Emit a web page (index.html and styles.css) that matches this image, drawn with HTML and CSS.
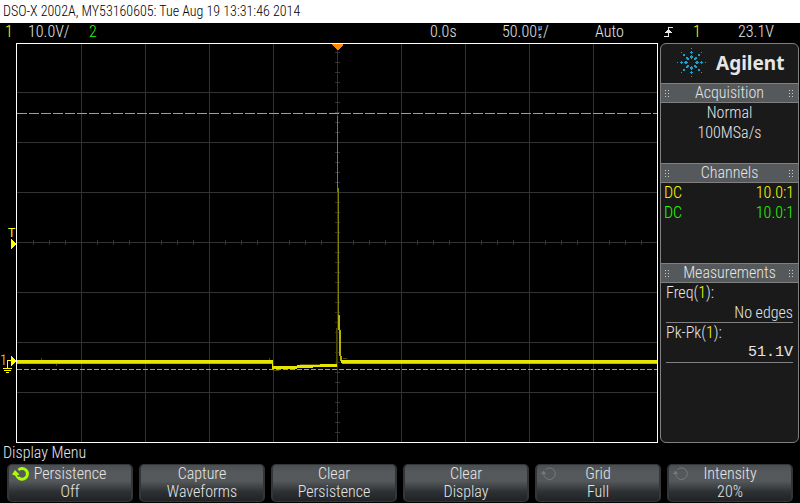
FILE: index.html
```html
<!DOCTYPE html>
<html lang="en">
<head>
<meta charset="utf-8">
<title>DSO-X 2002A</title>
<link rel="stylesheet" href="styles.css">
</head>
<body>
<div class="scope">
  <header class="title">DSO-X 2002A, MY53160605: Tue Aug 19 13:31:46 2014</header>

  <div class="status">
    <span class="ch1">1</span>
    <span>10.0V/</span>
    <span class="ch2">2</span>
    <span>0.0s</span>
    <span class="rate">50.00<span class="unit"><span>µ</span><span>s</span></span>/</span>
    <span>Auto</span>
    <svg class="edge" width="9" height="12" viewBox="0 0 9 12" shape-rendering="crispEdges" aria-hidden="true">
      <path d="M0 10H4V1H9V2H5V11H0Z" fill="#e6e6e6"/>
      <path d="M4 3H5V4H6V5H7V6H8V7H1V6H2V5H3V4H4Z" fill="#e6e6e6"/>
    </svg>
    <span class="ch1">1</span>
    <span>23.1V</span>
  </div>

  <main class="main">
    <svg class="plot" viewBox="0 43 659 400" preserveAspectRatio="none" shape-rendering="crispEdges" role="img" aria-label="Waveform display">
      <path class="grid" d="M81.500 43V442M145.500 43V442M209.500 43V442M273.500 43V442M337.500 43V442M401.500 43V442M465.500 43V442M529.500 43V442M593.500 43V442M17 92.500H657M17 142.500H657M17 192.500H657M17 242.500H657M17 292.500H657M17 342.500H657M17 392.500H657"/>
      <line class="ticks-x" x1="33" y1="242.500" x2="657" y2="242.500"/>
      <line class="ticks-y" x1="337.500" y1="52" x2="337.500" y2="442"/>
      <rect class="frame" x="16.500" y="43.500" width="641" height="399"/>
      <line class="cursor cursor-top" x1="17" y1="113.500" x2="657" y2="113.500"/>
      <line class="cursor cursor-low" x1="17" y1="369.500" x2="657" y2="369.500"/>

      <path class="dim" d="M336.500 328V364M300 364.500H336M273 370.500H279M41.500 358V360M56.500 364V366M269.500 358V360M343 358.500H347"/>
      <path class="spike" d="M337.500 116V192M338.500 188V318"/>
      <path class="spike-low" d="M338.500 315L339.500 330V350L341.500 361"/>
      <path class="trace-edge" d="M17 363.500H272M342 363.500H657"/>
      <path class="trace" d="M17 360H273V366H297V365H320V364H337V367H313V368H297V369H272V363H17ZM341 360H657V363H341Z"/>

      <path class="orange" d="M332 44H343V45L338 50H337L332 45Z"/>
      <path class="yellow" d="M11 239L16 244L11 249ZM11 356L16 361L11 366Z"/>
      <path class="ground" d="M11 360.500H7.500V368M3 368.500H12M4 370.500H11M6 372.500H9"/>
      <text class="mark trigger" x="8" y="237">T</text>
      <text class="mark" x="0" y="365">1</text>
    </svg>

    <aside class="panel">
      <div class="brand">
        <svg width="30" height="30" viewBox="0 0 30 30" shape-rendering="crispEdges" aria-hidden="true">
          <g fill="#1ba0cc">
            <path d="M14 0h1v1h-1zM14 3h1v1h1v1h-1v1h-1v-1h-1v-1h1zM14 7h1v1h1v2h-1v1h-1v-1h-1v-2h1z"/>
            <path d="M14 28h1v1h-1zM14 23h1v1h1v1h-1v1h-1v-1h-1v-1h1zM14 18h1v1h1v2h-1v1h-1v-1h-1v-2h1z"/>
            <path d="M0 14h1v1H0zM3 14h1v-1h1v1h1v1h-1v1h-1v-1h-1zM7 14h1v-1h2v1h1v1h-1v1h-2v-1h-1z"/>
            <path d="M28 14h1v1h-1zM23 14h1v-1h1v1h1v1h-1v1h-1v-1h-1zM18 14h1v-1h2v1h1v1h-1v1h-2v-1h-1z"/>
            <path d="M4 4h1v1H4zM6 6h2v2H6zM9 9h2v1h1v2h-2v-1H9zM24 4h1v1h-1zM21 6h2v2h-2zM18 9h2v2h-1v1h-2v-2h1z"/>
            <path d="M4 24h1v1H4zM6 21h2v2H6zM10 17h2v2h-1v1H9v-2h1zM24 24h1v1h-1zM21 21h2v2h-2zM17 17h2v1h1v2h-2v-1h-1z"/>
          </g>
        </svg>
        <span>Agilent</span>
      </div>
      <h2 class="head"><i class="grip"></i>Acquisition<i class="grip"></i></h2>
      <div class="acquisition"><div>Normal</div><div>100MSa/s</div></div>
      <h2 class="head"><i class="grip"></i>Channels<i class="grip"></i></h2>
      <div class="channels">
        <div class="pair ch1"><span>DC</span><span>10.0:1</span></div>
        <div class="pair ch2"><span>DC</span><span>10.0:1</span></div>
      </div>
      <h2 class="head"><i class="grip"></i>Measurements<i class="grip"></i></h2>
      <dl class="measures">
        <dt>Freq(<span class="ch1">1</span>):</dt><dd>No edges</dd>
        <dt>Pk-Pk(<span class="ch1">1</span>):</dt><dd class="mono">51.1V</dd>
      </dl>
    </aside>
  </main>

  <div class="menu-title">Display Menu</div>
  <nav class="keys" aria-label="Display Menu">
    <button class="key"><svg class="knob on" viewBox="0 0 18 16" aria-hidden="true"><path d="M6.500 4A5.300 5.300 0 1 1 6 11.200" class="arc"/><path d="M0 8.500L3 4L7.500 8.500L5 9.500L7 12L5 12.500L3 9.500Z"/></svg><span>Persistence</span><span>Off</span></button>
    <button class="key"><span>Capture</span><span>Waveforms</span></button>
    <button class="key"><span>Clear</span><span>Persistence</span></button>
    <button class="key"><span>Clear</span><span>Display</span></button>
    <button class="key"><svg class="knob" viewBox="0 0 18 16" aria-hidden="true"><path d="M5.500 3.500A5.800 5.800 0 1 1 3.700 8" class="arc"/><path d="M1 8L3.500 4.500L6 8Z"/></svg><span>Grid</span><span>Full</span></button>
    <button class="key"><svg class="knob" viewBox="0 0 18 16" aria-hidden="true"><path d="M5.500 3.500A5.800 5.800 0 1 1 3.700 8" class="arc"/><path d="M1 8L3.500 4.500L6 8Z"/></svg><span>Intensity</span><span>20%</span></button>
  </nav>
</div>
</body>
</html>
```
FILE: styles.css
```css
* { box-sizing: border-box; }

body {
  margin: 0;
  background: #000;
  color: #e6e6e6;
  font-family: "Roboto Condensed", "Liberation Sans Narrow", "DejaVu Sans Condensed", sans-serif;
  font-size: 16px;
  font-weight: 300;
  line-height: 20px;
}

.scope {
  display: flex;
  flex-direction: column;
  min-height: 100vh;
}

.title {
  height: 23px;
  padding: 0 3px;
  background: #fff;
  color: #000;
  font-size: 14px;
  line-height: 23px;
  white-space: nowrap;
}

.status {
  display: grid;
  grid-template-columns: 23fr 61fr 341fr 72fr 93fr 69fr 29fr 45fr 62fr;
  height: 20px;
  padding-left: 5px;
  line-height: 18px;
  white-space: nowrap;
}

.rate { display: flex; }
.unit { display: flex; flex-direction: column; padding: 1px 1px 0; font-size: 8px; font-weight: 400; line-height: 8px; }
.edge { margin-top: 3px; }

.ch1 { color: #ff0; }
.ch2 { color: #2f0; }

.main {
  display: flex;
  flex: 1;
  min-height: 400px;
}

.plot { flex: 1; min-width: 0; height: 400px; margin-right: 1px; }
.grid { fill: none; stroke: #333; }
.ticks-x { stroke: #333; stroke-width: 5; stroke-dasharray: 1 15; }
.ticks-y { stroke: #333; stroke-width: 5; stroke-dasharray: 1 9; }
.frame { fill: none; stroke: #fff; }
.cursor { stroke: #ff8a00; }
.cursor-top { stroke-dasharray: 10 2; }
.cursor-low { stroke-dasharray: 5 2; }
.dim { fill: none; stroke: #4a4a00; }
.spike { fill: none; stroke: #808000; }
.spike-low { fill: none; stroke: #b3b300; stroke-width: 2; }
.trace { fill: #e6e600; }
.trace-edge { fill: none; stroke: #b8b800; }
.orange { fill: #ff8a00; }
.yellow { fill: #ff0; }
.ground { fill: none; stroke: #ff0; }
.mark { fill: #ff0; font-size: 14px; }
.trigger { font-family: "Liberation Sans", sans-serif; font-size: 12px; }

.panel {
  width: 139px;
  height: 400px;
  margin-right: 1px;
  border: 1px solid #808080;
  border-radius: 6px;
  background: #1a1a1a;
}

.brand {
  display: flex;
  align-items: center;
  gap: 9px;
  height: 39px;
  padding: 0 0 2px 16px;
  font: bold 19px/34px "Noto Sans", sans-serif;
}

.head {
  display: flex;
  align-items: center;
  justify-content: space-between;
  height: 20px;
  margin: 0;
  padding: 0 4px;
  border: solid #808080;
  border-width: 1px 0;
  background: #55595b;
  font-size: 16px;
  font-weight: 300;
  line-height: 18px;
}

.grip {
  width: 5px;
  height: 7px;
  background: conic-gradient(from 270deg at 1px 1px, #ccc 90deg, transparent 0) 0 0 / 3px 3px;
}

.acquisition { height: 60px; text-align: center; }
.channels { height: 80px; padding: 0 4px 0 3px; }
.pair { display: flex; justify-content: space-between; }
.measures { margin: 0 5px; }
.measures dd { margin: 0; border-bottom: 1px solid #808080; line-height: 19px; text-align: right; }
.measures .mono { font-family: "Liberation Mono", monospace; font-size: 15px; }

.menu-title { height: 21px; padding-left: 3px; }

.keys {
  display: grid;
  grid-template-columns: repeat(6, 1fr);
  gap: 6px;
  padding: 0 7px 1px;
}

.key {
  position: relative;
  display: flex;
  flex-direction: column;
  align-items: center;
  height: 38px;
  padding: 0;
  border: 2px solid #333638;
  border-top-width: 1px;
  border-bottom-width: 1px;
  border-radius: 5px;
  background: linear-gradient(#4a4e50, #56595b 20%, #54585a 45%, #2c3032 75%, #202426);
  color: #e6e6e6;
  font: inherit;
  line-height: 18px;
}

.knob { position: absolute; top: 1px; left: 3px; width: 18px; height: 16px; fill: #777a7c; stroke: #777a7c; }
.knob path { stroke-width: 0; }
.knob .arc { fill: none; stroke-width: 1; }
.knob.on { fill: #af0; stroke: #af0; }
.knob.on .arc { stroke-width: 3; }
```
